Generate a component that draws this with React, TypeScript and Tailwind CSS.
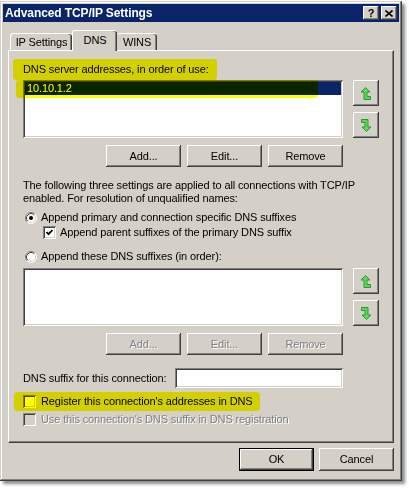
import React from "react";

const raised =
  "shadow-[inset_-1px_-1px_0_#404040,inset_1px_1px_0_#ffffff,inset_-2px_-2px_0_#808080,inset_2px_2px_0_#d4d0c8]";
const sunken =
  "shadow-[inset_1px_1px_0_#808080,inset_-1px_-1px_0_#ffffff,inset_2px_2px_0_#404040,inset_-2px_-2px_0_#d4d0c8]";
const grayText = "text-[#808080] [text-shadow:1px_1px_0_#ffffff]";

const Btn = ({ label, disabled, isDefault }: { label: string; disabled?: boolean; isDefault?: boolean }) => (
  <div
    className={`flex h-[22px] w-[75px] items-center justify-center bg-[#d4d0c8] ${
      isDefault
        ? "h-[23px] shadow-[inset_0_0_0_1px_#000000,inset_-2px_-2px_0_#404040,inset_2px_2px_0_#ffffff,inset_-3px_-3px_0_#808080]"
        : raised
    } ${disabled ? grayText : ""}`}
  >
    {label}
  </div>
);

const ArrowUp = () => (
  <svg width="10" height="13" viewBox="0 0 10 13">
    <polygon points="4.5,0.5 9,5 6,5 6,9.5 9.5,9.5 9.5,12.5 3,12.5 3,5 0,5" fill="#5cd65c" stroke="#2b9a2b" strokeWidth="1" />
  </svg>
);

const ArrowDown = () => (
  <svg width="10" height="13" viewBox="0 0 10 13">
    <polygon points="0.5,0.5 7,0.5 7,8 10,8 5.5,12.5 1,8 4,8 4,3.5 0.5,3.5" fill="#5cd65c" stroke="#2b9a2b" strokeWidth="1" />
  </svg>
);

const MoveButtons = () => (
  <div className="ml-[10px] flex flex-col gap-[6px]">
    <div className={`flex h-[26px] w-[26px] items-center justify-center bg-[#d4d0c8] ${raised}`}>
      <ArrowUp />
    </div>
    <div className={`flex h-[26px] w-[26px] items-center justify-center bg-[#d4d0c8] ${raised}`}>
      <ArrowDown />
    </div>
  </div>
);

const Radio = ({ checked }: { checked?: boolean }) => (
  <svg width="12" height="12" viewBox="0 0 12 12" className="shrink-0">
    <circle cx="6" cy="6" r="5.5" fill="#ffffff" />
    <path d="M2.11 9.89 A5.5 5.5 0 0 1 9.89 2.11" fill="none" stroke="#808080" />
    <path d="M9.89 2.11 A5.5 5.5 0 0 1 2.11 9.89" fill="none" stroke="#ffffff" />
    <path d="M2.82 9.18 A4.5 4.5 0 0 1 9.18 2.82" fill="none" stroke="#404040" />
    <path d="M9.18 2.82 A4.5 4.5 0 0 1 2.82 9.18" fill="none" stroke="#d4d0c8" />
    {checked && <circle cx="6" cy="6" r="2" fill="#000000" />}
  </svg>
);

const Check = ({ checked, disabled }: { checked?: boolean; disabled?: boolean }) => (
  <div className={`flex h-[13px] w-[13px] shrink-0 items-center justify-center ${disabled ? "bg-[#d4d0c8]" : "bg-white"} ${sunken}`}>
    {checked && (
      <svg width="9" height="9" viewBox="0 0 9 9">
        <polyline points="1.5,4 3.5,6.2 7.5,2" fill="none" stroke="#000000" strokeWidth="1.8" />
      </svg>
    )}
  </div>
);

const CaptionBtn = ({ children }: { children: React.ReactNode }) => (
  <div className={`flex h-[14px] w-[16px] items-center justify-center bg-[#d4d0c8] font-bold text-[11px] ${raised}`}>
    {children}
  </div>
);

export default function App() {
  return (
    <div className="relative h-[488px] w-[409px] overflow-hidden bg-white font-['Liberation_Sans',Arial,sans-serif] text-[11px] leading-[13px] tracking-[-0.12px] text-black">
      <div
        className={`mt-[1px] h-[480px] w-[402px] bg-[#d4d0c8] p-[3px] shadow-[inset_-1px_-1px_0_#404040,inset_1px_1px_0_#d4d0c8,inset_-2px_-2px_0_#808080,inset_2px_2px_0_#ffffff,3px_3px_3px_rgba(0,0,0,0.45)]`}
      >
        {/* title bar */}
        <div className="flex h-[18px] items-center justify-between bg-[#0a246a] pl-[2px] pr-[2px]">
          <span className="text-[12px] font-bold tracking-[-0.1px] text-white">Advanced TCP/IP Settings</span>
          <div className="flex gap-[2px]">
            <CaptionBtn>?</CaptionBtn>
            <CaptionBtn>
              <svg width="8" height="7" viewBox="0 0 8 7">
                <path d="M0.5 0.5 L7.5 6.5 M7.5 0.5 L0.5 6.5" stroke="#000000" strokeWidth="1.6" />
              </svg>
            </CaptionBtn>
          </div>
        </div>

        <div className="px-[5px]">
          {/* tabs */}
          <div className="mt-[8px] flex h-[20px] items-end pl-[2px]">
            <div className="flex h-[17px] w-[62px] items-center justify-center rounded-t-[3px] border-l border-t border-white shadow-[inset_-1px_0_0_#404040,inset_-2px_0_0_#808080]">
              IP Settings
            </div>
            <div className="relative z-10 -mb-px flex h-[21px] w-[45px] items-start justify-center rounded-t-[3px] border-l border-t border-white bg-[#d4d0c8] pt-[3px] shadow-[inset_-1px_0_0_#404040,inset_-2px_0_0_#808080]">
              DNS
            </div>
            <div className="flex h-[17px] w-[40px] items-center justify-center rounded-t-[3px] border-t border-white shadow-[inset_-1px_0_0_#404040,inset_-2px_0_0_#808080]">
              WINS
            </div>
          </div>

          {/* panel */}
          <div className="h-[393px] border border-b-[#404040] border-l-white border-r-[#404040] border-t-white pl-[14px] shadow-[inset_-1px_-1px_0_#808080]">
            <div className="mt-[12px]">DNS server addresses, in order of use:</div>

            <div className="mt-[4px] flex">
              <div className={`h-[58px] w-[320px] bg-white p-[2px] ${sunken}`}>
                <div className="h-[13px] bg-[#0a246a] pl-[2px] text-white">10.10.1.2</div>
              </div>
              <MoveButtons />
            </div>

            <div className="mt-[7px] flex w-[320px] justify-end gap-[6px]">
              <Btn label="Add..." />
              <Btn label="Edit..." />
              <Btn label="Remove" />
            </div>

            <div className="mt-[12px] whitespace-nowrap">
              The following three settings are applied to all connections with TCP/IP
              <br />
              enabled. For resolution of unqualified names:
            </div>

            <div className="mt-[6px] flex items-center gap-[4px] pl-[2px]">
              <Radio checked />
              <span>Append primary and connection specific DNS suffixes</span>
            </div>
            <div className="mt-[2px] flex items-center gap-[4px] pl-[20px]">
              <Check checked />
              <span>Append parent suffixes of the primary DNS suffix</span>
            </div>
            <div className="mt-[11px] flex items-center gap-[4px] pl-[2px]">
              <Radio />
              <span>Append these DNS suffixes (in order):</span>
            </div>

            <div className="mt-[5px] flex">
              <div className={`h-[58px] w-[320px] bg-white ${sunken}`} />
              <MoveButtons />
            </div>

            <div className="mt-[7px] flex w-[320px] justify-end gap-[6px]">
              <Btn label="Add..." disabled />
              <Btn label="Edit..." disabled />
              <Btn label="Remove" disabled />
            </div>

            <div className="mt-[13px] flex w-[320px] items-center justify-between">
              <span>DNS suffix for this connection:</span>
              <div className={`h-[20px] w-[168px] bg-white ${sunken}`} />
            </div>

            <div className="mt-[7px] flex items-center gap-[5px]">
              <Check />
              <span>Register this connection's addresses in DNS</span>
            </div>
            <div className="mt-[5px] flex items-center gap-[5px]">
              <Check disabled />
              <span className={grayText}>Use this connection's DNS suffix in DNS registration</span>
            </div>
          </div>

          {/* dialog buttons */}
          <div className="mt-[5px] flex justify-end gap-[5px]">
            <Btn label="OK" isDefault />
            <div className={`flex h-[23px] w-[75px] items-center justify-center bg-[#d4d0c8] ${raised}`}>Cancel</div>
          </div>
        </div>
      </div>

      {/* highlighter marks */}
      <div className="pointer-events-none absolute left-[13px] top-[59px] h-[21px] w-[204px] rounded-[3px] bg-[#ffff00] mix-blend-multiply" />
      <div className="pointer-events-none absolute left-[16px] top-[80px] h-[18px] w-[302px] rounded-[3px] bg-[#ffff00] mix-blend-multiply" />
      <div className="pointer-events-none absolute left-[14px] top-[392px] h-[19px] w-[246px] rounded-[4px] bg-[#ffff00] mix-blend-multiply" />
    </div>
  );
}
